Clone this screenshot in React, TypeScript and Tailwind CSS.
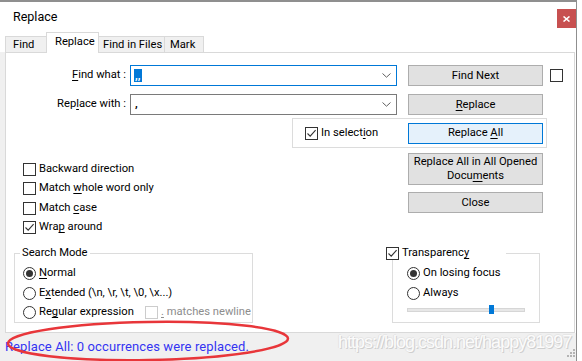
import React from "react";

function Check({ checked = false, disabled = false }: { checked?: boolean; disabled?: boolean }) {
  return (
    <span
      className={
        "w-[13px] h-[13px] border bg-white flex items-center justify-center shrink-0 " +
        (disabled ? "border-[#cccccc]" : "border-[#333333]")
      }
    >
      {checked && (
        <svg width="11" height="11" viewBox="0 0 11 11">
          <path d="M1.5 5.5 L4.2 8.2 L9.6 2.2" stroke="#333" fill="none" strokeWidth="1.1" />
        </svg>
      )}
    </span>
  );
}

function Radio({ checked = false }: { checked?: boolean }) {
  return (
    <span className="w-[13px] h-[13px] rounded-full border border-[#333333] bg-white flex items-center justify-center shrink-0">
      {checked && <span className="w-[7px] h-[7px] rounded-full bg-[#333333]" />}
    </span>
  );
}

function Btn({ children, className = "" }: { children: React.ReactNode; className?: string }) {
  return (
    <div
      className={
        "w-[135px] border flex items-center justify-center text-center leading-[14px] whitespace-nowrap " +
        className
      }
    >
      {children}
    </div>
  );
}

function Chevron() {
  return (
    <svg width="9" height="5" viewBox="0 0 9 5" className="absolute right-[5px] top-[7px]">
      <path d="M0.5 0.5 L4.5 4.2 L8.5 0.5" stroke="#606060" fill="none" strokeWidth="1" />
    </svg>
  );
}

export default function App() {
  return (
    <div className="w-[582px] h-[361px] bg-white overflow-hidden relative font-['Roboto',sans-serif] text-[11.2px] text-black whitespace-nowrap">
      <div className="w-[577px] h-[361px] flex flex-col border-t-2 border-r border-[#8f8f8f]">
        {/* title bar */}
        <div className="h-[30px] flex items-start justify-between shrink-0">
          <div className="pl-[13px] pt-[6px] text-[12.5px] leading-[17px]">Replace</div>
          <div className="mt-[7px] w-[19px] h-[19px] bg-[#c75050] flex items-center justify-center">
            <svg width="7" height="6" viewBox="0 0 7 6">
              <path d="M0.5 0.5 L6.5 5.5 M6.5 0.5 L0.5 5.5" stroke="#fff" strokeWidth="1.6" />
            </svg>
          </div>
        </div>
        {/* tabs */}
        <div className="h-[20px] flex items-end pl-[5px] shrink-0">
          <div className="w-[42px] h-[16px] border border-b-0 border-[#d9d9d9] bg-[#f0f0f0] flex items-center pl-[7px] pt-[1px]">
            Find
          </div>
          <div className="w-[53px] h-[21px] -mb-px -ml-px border border-b-0 border-[#d9d9d9] bg-white flex items-center pl-[8px] pb-[1px] relative z-10">
            Replace
          </div>
          <div className="w-[67px] h-[16px] -ml-px border border-b-0 border-[#d9d9d9] bg-[#f0f0f0] flex items-center pl-[4px] pt-[1px]">
            Find in Files
          </div>
          <div className="w-[40px] h-[16px] -ml-px border border-b-0 border-[#d9d9d9] bg-[#f0f0f0] flex items-center pl-[5px] pt-[1px]">
            Mark
          </div>
        </div>
        {/* body */}
        <div className="flex-1 flex min-h-0">
          <div className="w-[5px] bg-[#f0f0f0]" />
          <div className="w-[570px] border border-[#d9d9d9] flex flex-col">
            {/* row 1 */}
            <div className="mt-[12px] h-[21px] flex items-center">
              <div className="w-[120px] text-right">
                <u className="underline-offset-2">F</u>ind what :
              </div>
              <div className="ml-[4px] w-[267px] h-[21px] border border-[#0078d7] bg-white relative flex items-center pl-[3px]">
                <span className="bg-[#0078d7] text-white h-[13px] leading-[13px] px-[1px] font-bold">,,</span>
                <Chevron />
              </div>
              <Btn className="ml-[11px] h-[21px] bg-[#e1e1e1] border-[#adadad]">Find Next</Btn>
              <div className="ml-[7px]">
                <Check />
              </div>
            </div>
            {/* row 2 */}
            <div className="mt-[8px] h-[21px] flex items-center">
              <div className="w-[120px] text-right">
                Rep<u className="underline-offset-2">l</u>ace with :
              </div>
              <div className="ml-[4px] w-[267px] h-[21px] border border-[#7a7a7a] bg-white relative flex items-center pl-[4px]">
                <span className="font-bold">,</span>
                <Chevron />
              </div>
              <Btn className="ml-[11px] h-[21px] bg-[#e1e1e1] border-[#adadad]">
                <span>
                  <u className="underline-offset-2">R</u>eplace
                </span>
              </Btn>
            </div>
            {/* row 3 */}
            <div className="mt-[3px] flex">
              <div className="ml-[286px] w-[255px] h-[30px] border border-[#dcdcdc] flex items-center pl-[12px]">
                <Check checked />
                <span className="ml-[3px]">
                  In select<u className="underline-offset-2">i</u>on
                </span>
                <Btn className="ml-auto mr-[3px] h-[21px] bg-[#e5f1fb] border-[#0078d7]">
                  <span>
                    Replace <u className="underline-offset-2">A</u>ll
                  </span>
                </Btn>
              </div>
            </div>
            {/* row 4 */}
            <div className="mt-[5px] flex">
              <div className="ml-[17px] pt-[6.5px] flex flex-col">
                <div className="h-[19.5px] flex items-center">
                  <Check />
                  <span className="ml-[3px]">Backward direction</span>
                </div>
                <div className="h-[19.5px] flex items-center">
                  <Check />
                  <span className="ml-[3px]">
                    Match <u className="underline-offset-2">w</u>hole word only
                  </span>
                </div>
                <div className="h-[19.5px] flex items-center">
                  <Check />
                  <span className="ml-[3px]">
                    Match <u className="underline-offset-2">c</u>ase
                  </span>
                </div>
                <div className="h-[19.5px] flex items-center">
                  <Check checked />
                  <span className="ml-[3px]">
                    Wra<u className="underline-offset-2">p</u> around
                  </span>
                </div>
              </div>
              <div className="ml-auto mr-[31px] flex flex-col gap-[7px]">
                <Btn className="h-[32px] bg-[#e1e1e1] border-[#adadad]">
                  <span>
                    Replace All in All Opened
                    <br />
                    Docu<u className="underline-offset-2">m</u>ents
                  </span>
                </Btn>
                <Btn className="h-[21px] bg-[#e1e1e1] border-[#adadad]">Close</Btn>
              </div>
            </div>
            {/* row 5 */}
            <div className="mt-[7.5px] flex">
              <fieldset className="ml-[8px] w-[239px] h-[78px] border border-[#dcdcdc]">
                <legend className="ml-[5px] px-[2px] leading-[16px]">Search Mode</legend>
                <div className="pl-[8px] pt-[3px] flex flex-col">
                  <div className="h-[19.5px] flex items-center">
                    <Radio checked />
                    <span className="ml-[3px]">
                      <u className="underline-offset-2">N</u>ormal
                    </span>
                  </div>
                  <div className="h-[19.5px] flex items-center">
                    <Radio />
                    <span className="ml-[3px]">
                      E<u className="underline-offset-2">x</u>tended (\n, \r, \t, \0, \x...)
                    </span>
                  </div>
                  <div className="h-[19.5px] flex items-center">
                    <div className="w-[122px] flex items-center">
                      <Radio />
                      <span className="ml-[3px]">
                        Re<u className="underline-offset-2">g</u>ular expression
                      </span>
                    </div>
                    <Check disabled />
                    <span className="ml-[3px] text-[#8d8d8d]">
                      <u className="underline-offset-2">.</u> matches newline
                    </span>
                  </div>
                </div>
              </fieldset>
              <fieldset className="ml-[139px] w-[148px] h-[78px] border border-[#dcdcdc]">
                <legend className="w-[113px] leading-[16px]">
                  <div className="-ml-[7px] w-[120px] flex items-center">
                    <Check checked />
                    <span className="ml-[3px]">
                      Transparenc<u className="underline-offset-2">y</u>
                    </span>
                  </div>
                </legend>
                <div className="pl-[14px] pt-[3px] flex flex-col">
                  <div className="h-[19.5px] flex items-center">
                    <Radio checked />
                    <span className="ml-[3px]">On losing focus</span>
                  </div>
                  <div className="h-[19.5px] flex items-center">
                    <Radio />
                    <span className="ml-[3px]">Always</span>
                  </div>
                  <div className="mt-[2px] h-[9px] w-[118px] flex items-center relative">
                    <div className="w-[118px] h-[4px] bg-[#e7e7e7] border border-[#d6d6d6]" />
                    <div className="absolute left-[82px] top-0 w-[5px] h-[9px] bg-[#0078d7]" />
                  </div>
                </div>
              </fieldset>
            </div>
          </div>
        </div>
        {/* status bar */}
        <div className="h-[28px] shrink-0 bg-[#f0f0f0] flex items-center pl-[5px] relative">
          <span className="text-[13px] tracking-[0.1px] text-[#3434f2]">Replace All: 0 occurrences were replaced.</span>
          <svg width="9" height="9" viewBox="0 0 9 9" className="absolute right-[0px] bottom-[3px]">
            <rect x="6" y="0" width="2" height="2" fill="#b4b4b4" />
            <rect x="3" y="3" width="2" height="2" fill="#b4b4b4" />
            <rect x="6" y="3" width="2" height="2" fill="#b4b4b4" />
            <rect x="0" y="6" width="2" height="2" fill="#b4b4b4" />
            <rect x="3" y="6" width="2" height="2" fill="#b4b4b4" />
            <rect x="6" y="6" width="2" height="2" fill="#b4b4b4" />
          </svg>
        </div>
      </div>
      {/* watermark */}
      <div className="absolute left-[338px] top-[331px] font-['Liberation_Sans',sans-serif] text-[18px] tracking-[-1px] leading-[22px] text-[#fbfbfb] [text-shadow:1px_1px_0_#cfcfcf,-1px_0_0_#e4e4e4,0_-1px_0_#e6e6e6] pointer-events-none">
        https://blog.csdn.net/happy81997
      </div>
      {/* red annotation ellipse */}
      <svg width="582" height="361" className="absolute left-0 top-0 pointer-events-none">
        <ellipse
          cx="148"
          cy="341"
          rx="140"
          ry="19"
          transform="rotate(-1 148 341)"
          stroke="#e8363a"
          strokeWidth="2.5"
          fill="none"
        />
      </svg>
    </div>
  );
}
